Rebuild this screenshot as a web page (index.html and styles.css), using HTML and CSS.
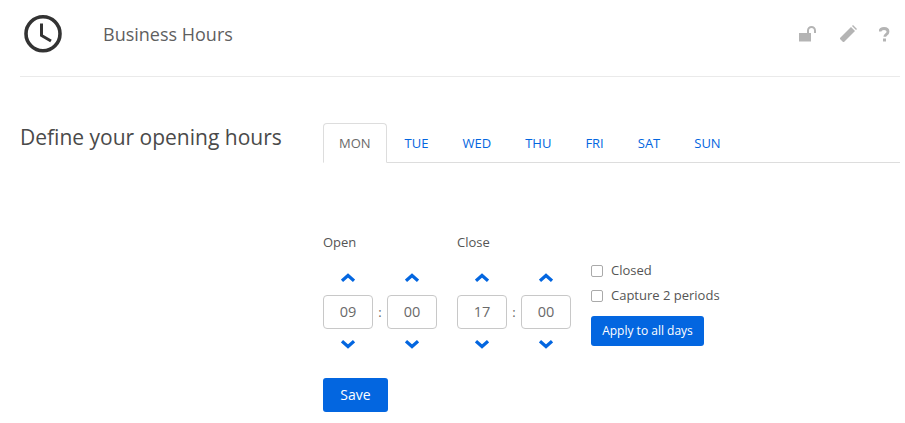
FILE: index.html
```html
<!DOCTYPE html>
<html lang="en">
<head>
<meta charset="utf-8">
<title>Business Hours</title>
<link rel="stylesheet" href="styles.css">
</head>
<body>
<header class="header">
  <svg class="clock" viewBox="0 0 40 40" width="40" height="40"><circle cx="20" cy="19.700" r="17" fill="none" stroke="#333" stroke-width="3.600"/><path d="M18.500 9.500V21.500L28 27" fill="none" stroke="#333" stroke-width="3"/></svg>
  <h1 class="title">Business Hours</h1>
  <div class="tools">
    <svg viewBox="0 0 18 16" width="18" height="16"><path d="M0 7h12v8.500H0z" fill="#b4b4b4"/><path d="M9 7V4.500a3.500 3.500 0 0 1 7 0V7" fill="none" stroke="#b4b4b4" stroke-width="2"/></svg>
    <svg viewBox="0 0 18 18" width="18" height="18"><path d="M1 13 12 2l4 4L5 17H1z" fill="#b4b4b4"/><path d="M13 1l1-1 4 4-1 1z" fill="#b4b4b4"/><path d="M1 14v3h3z" fill="#fff"/></svg>
    <svg viewBox="0.500 0 11 15" width="11" height="15"><path d="M1.500 4.500C1.500 2.500 3.200 1.500 5.500 1.500s4 1.200 4 3.200c0 2.800-3.200 2.400-3.200 5" fill="none" stroke="#b4b4b4" stroke-width="2.800"/><path d="M4.500 11.500h3v3h-3z" fill="#b4b4b4"/></svg>
  </div>
</header>
<main class="main">
  <h2 class="heading">Define your opening hours</h2>
  <div class="content">
    <nav class="tabs">
      <a class="tab active">MON</a><a class="tab">TUE</a><a class="tab">WED</a><a class="tab">THU</a><a class="tab">FRI</a><a class="tab">SAT</a><a class="tab">SUN</a>
    </nav>
    <div class="hours">
      <div class="group">
        <div class="label">Open</div>
        <div class="pickers">
          <div class="spin"><svg class="chev" viewBox="0 0 14 9"><path d="M1 7.800 7 2.500l6 5.300" fill="none" stroke="#0366e0" stroke-width="3.200"/></svg><div class="box">09</div><svg class="chev" viewBox="0 0 14 9"><path d="M1 1.200 7 6.500l6-5.300" fill="none" stroke="#0366e0" stroke-width="3.200"/></svg></div>
          <span class="colon">:</span>
          <div class="spin"><svg class="chev" viewBox="0 0 14 9"><path d="M1 7.800 7 2.500l6 5.300" fill="none" stroke="#0366e0" stroke-width="3.200"/></svg><div class="box">00</div><svg class="chev" viewBox="0 0 14 9"><path d="M1 1.200 7 6.500l6-5.300" fill="none" stroke="#0366e0" stroke-width="3.200"/></svg></div>
        </div>
      </div>
      <div class="group">
        <div class="label">Close</div>
        <div class="pickers">
          <div class="spin"><svg class="chev" viewBox="0 0 14 9"><path d="M1 7.800 7 2.500l6 5.300" fill="none" stroke="#0366e0" stroke-width="3.200"/></svg><div class="box">17</div><svg class="chev" viewBox="0 0 14 9"><path d="M1 1.200 7 6.500l6-5.300" fill="none" stroke="#0366e0" stroke-width="3.200"/></svg></div>
          <span class="colon">:</span>
          <div class="spin"><svg class="chev" viewBox="0 0 14 9"><path d="M1 7.800 7 2.500l6 5.300" fill="none" stroke="#0366e0" stroke-width="3.200"/></svg><div class="box">00</div><svg class="chev" viewBox="0 0 14 9"><path d="M1 1.200 7 6.500l6-5.300" fill="none" stroke="#0366e0" stroke-width="3.200"/></svg></div>
        </div>
      </div>
      <div class="options">
        <label class="check"><span class="tick"></span>Closed</label>
        <label class="check"><span class="tick"></span>Capture 2 periods</label>
        <button class="btn small">Apply to all days</button>
      </div>
    </div>
    <button class="btn save">Save</button>
  </div>
</main>
</body>
</html>
```
FILE: styles.css
```css
* { box-sizing: border-box; }
html, body { margin: 0; background: #fff; }
body { font-family: "Open Sans", sans-serif; color: #555; height: 423px; overflow: hidden; padding: 0 5px 0 20px; }
.header { display: flex; align-items: center; height: 77px; border-bottom: 1px solid #eaeaea; padding: 0 10px 8px 3px; }
.clock { flex: none; }
.title { margin: 0 0 0 40px; font-size: 18px; font-weight: 400; color: #5f5f5f; flex: 1; }
.tools { display: flex; align-items: center; gap: 22px; }
.main { display: flex; padding-top: 46px; }
.heading { margin: 0; width: 303px; font-size: 21px; font-weight: 400; line-height: 28px; color: #4a4a4a; white-space: nowrap; }
.content { flex: 1; }
.tabs { display: flex; gap: 2px; height: 40px; border-bottom: 1px solid #ddd; }
.tab { height: 40px; padding: 0 16px; font-size: 13px; line-height: 39px; color: #0366e0; border-top: 1px solid transparent; }
.tab.active { color: #6a6a6a; background: #fff; border: 1px solid #ddd; border-bottom-color: #fff; border-radius: 4px 4px 0 0; padding: 0 15px; }
.hours { display: flex; padding-top: 71px; }
.group { margin-right: 20px; }
.label { font-size: 13px; line-height: 17px; color: #555; margin-bottom: 22px; }
.pickers { display: flex; }
.spin { display: flex; flex-direction: column; align-items: center; width: 50px; }
.chev { width: 14px; height: 9px; }
.spin .chev:first-child { margin: 0 0 13px; }
.spin .chev:last-child { margin: 11px 0 0; }
.box { width: 50px; height: 34px; border: 1px solid #c8c8c8; border-radius: 4px; font-size: 14.500px; line-height: 32px; text-align: center; color: #6a6a6a; }
.colon { width: 14px; text-align: center; font-size: 13px; line-height: 34px; color: #666; margin-top: 22px; }
.options { margin-top: 24px; display: flex; flex-direction: column; align-items: flex-start; }
.check { display: flex; align-items: center; font-size: 13px; line-height: 17px; height: 25px; color: #555; }
.tick { width: 12px; height: 12px; border: 1px solid #aaa; border-radius: 2px; margin-right: 8px; background: #fff; }
.btn { display: block; background: #0366e0; color: #fff; border: 0; border-radius: 3px; font-family: inherit; padding: 0 0 2px; }
.btn.small { width: 113px; height: 30px; font-size: 12px; margin-top: 8px; }
.btn.save { width: 65px; height: 34px; font-size: 14px; margin-top: 29px; }
```
